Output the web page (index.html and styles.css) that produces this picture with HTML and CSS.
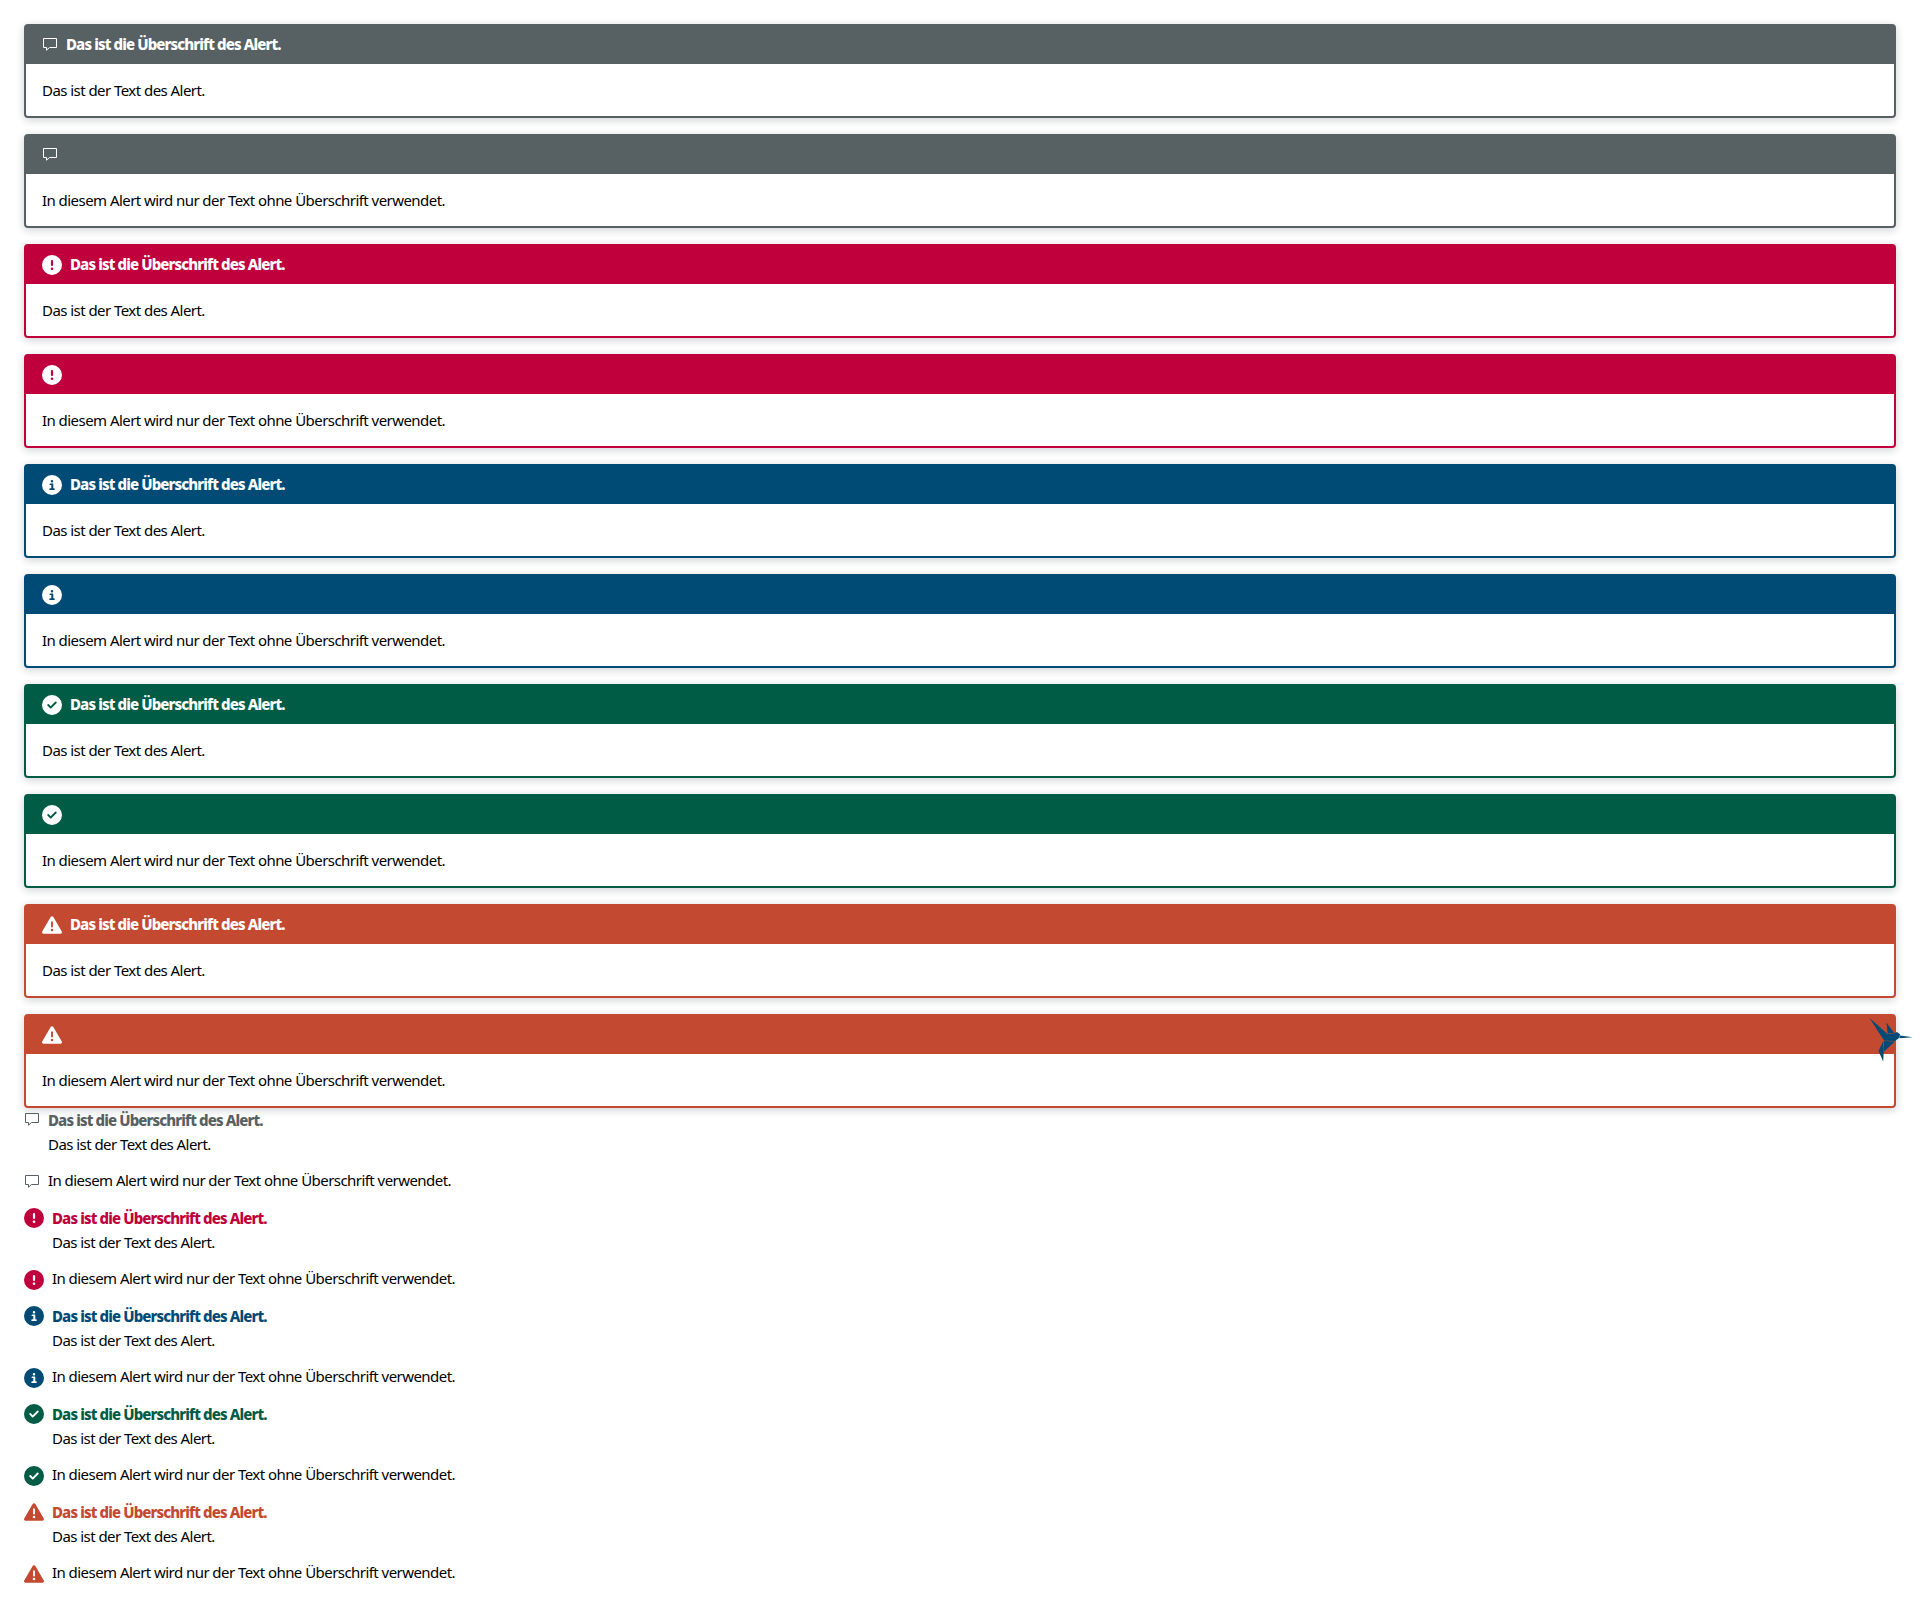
FILE: index.html
```html
<!DOCTYPE html>
<html lang="de">
<head>
<meta charset="utf-8">
<title>Alerts</title>
<link rel="stylesheet" href="styles.css">
</head>
<body>
<svg class="sprite" aria-hidden="true">
  <symbol id="message" viewBox="0 0 16 20"><path d="M1.5 3.5h13v9H7.500l-3 2.700v-2.700h-3z" fill="none" stroke="currentColor"/></symbol>
  <symbol id="error" viewBox="0 0 20 20"><path fill-rule="evenodd" fill="currentColor" d="M10 0a10 10 0 1 0 0 20a10 10 0 1 0 0-20zM10 5q1.1 0 1.1 1.1v4q0 1-1.1 1t-1.1-1v-4Q8.900 5 10 5zM10 12.500a1.300 1.300 0 1 1 0 2.600a1.300 1.300 0 1 1 0-2.600z"/></symbol>
  <symbol id="info" viewBox="0 0 20 20"><path fill-rule="evenodd" fill="currentColor" d="M10 0a10 10 0 1 0 0 20a10 10 0 1 0 0-20zM10 5a1.250 1.250 0 1 1 0 2.500a1.250 1.250 0 1 1 0-2.500zM8.400 8.400h2.400q.5 0 .5.5v4.400h.6q.9 0 .9.850t-.9.850H8.200q-.9 0-.9-.850t.9-.850h1.100v-3.200h-.9q-.9 0-.9-.850t.9-.850z"/></symbol>
  <symbol id="success" viewBox="0 0 20 20"><path fill-rule="evenodd" fill="currentColor" d="M10 0a10 10 0 1 0 0 20a10 10 0 1 0 0-20zM14.400 8.200l-5 5a.94.94 0 0 1-1.330 0l-2.500-2.500a.94.94 0 0 1 1.330-1.330l1.840 1.840 4.340-4.340a.94.94 0 0 1 1.330 1.330z"/></symbol>
  <symbol id="warning" viewBox="0 0 20 20"><path fill-rule="evenodd" fill="currentColor" d="M10 1.250c.55 0 1.070.3 1.350.78l8.430 14.370a1.570 1.570 0 0 1-1.370 2.350H1.570A1.570 1.570 0 0 1 .22 16.400L8.650 2.030C8.930 1.550 9.450 1.250 10 1.250zM10 6.250a.94.94 0 0 0-.94.94v4.370a.94.94 0 0 0 1.880 0V7.190A.94.94 0 0 0 10 6.250zM10 13.750a1.250 1.250 0 1 0 0 2.500a1.250 1.250 0 1 0 0-2.500z"/></symbol>
</svg>
<main>
  <div class="cards">
    <section class="card default"><h2><svg class="icon slim"><use href="#message"/></svg><span>Das ist die Überschrift des Alert.</span></h2><p>Das ist der Text des Alert.</p></section>
    <section class="card default"><h2><svg class="icon slim"><use href="#message"/></svg></h2><p>In diesem Alert wird nur der Text ohne Überschrift verwendet.</p></section>
    <section class="card error"><h2><svg class="icon"><use href="#error"/></svg><span>Das ist die Überschrift des Alert.</span></h2><p>Das ist der Text des Alert.</p></section>
    <section class="card error"><h2><svg class="icon"><use href="#error"/></svg></h2><p>In diesem Alert wird nur der Text ohne Überschrift verwendet.</p></section>
    <section class="card info"><h2><svg class="icon"><use href="#info"/></svg><span>Das ist die Überschrift des Alert.</span></h2><p>Das ist der Text des Alert.</p></section>
    <section class="card info"><h2><svg class="icon"><use href="#info"/></svg></h2><p>In diesem Alert wird nur der Text ohne Überschrift verwendet.</p></section>
    <section class="card success"><h2><svg class="icon"><use href="#success"/></svg><span>Das ist die Überschrift des Alert.</span></h2><p>Das ist der Text des Alert.</p></section>
    <section class="card success"><h2><svg class="icon"><use href="#success"/></svg></h2><p>In diesem Alert wird nur der Text ohne Überschrift verwendet.</p></section>
    <section class="card warning"><h2><svg class="icon"><use href="#warning"/></svg><span>Das ist die Überschrift des Alert.</span></h2><p>Das ist der Text des Alert.</p></section>
    <section class="card warning"><h2><svg class="icon"><use href="#warning"/></svg></h2><p>In diesem Alert wird nur der Text ohne Überschrift verwendet.</p></section>
  </div>
  <div class="messages">
    <section class="msg default"><svg class="icon slim"><use href="#message"/></svg><div><h2><span>Das ist die Überschrift des Alert.</span></h2><p>Das ist der Text des Alert.</p></div></section>
    <section class="msg single default"><svg class="icon slim"><use href="#message"/></svg><p>In diesem Alert wird nur der Text ohne Überschrift verwendet.</p></section>
    <section class="msg error"><svg class="icon"><use href="#error"/></svg><div><h2><span>Das ist die Überschrift des Alert.</span></h2><p>Das ist der Text des Alert.</p></div></section>
    <section class="msg single error"><svg class="icon"><use href="#error"/></svg><p>In diesem Alert wird nur der Text ohne Überschrift verwendet.</p></section>
    <section class="msg info"><svg class="icon"><use href="#info"/></svg><div><h2><span>Das ist die Überschrift des Alert.</span></h2><p>Das ist der Text des Alert.</p></div></section>
    <section class="msg single info"><svg class="icon"><use href="#info"/></svg><p>In diesem Alert wird nur der Text ohne Überschrift verwendet.</p></section>
    <section class="msg success"><svg class="icon"><use href="#success"/></svg><div><h2><span>Das ist die Überschrift des Alert.</span></h2><p>Das ist der Text des Alert.</p></div></section>
    <section class="msg single success"><svg class="icon"><use href="#success"/></svg><p>In diesem Alert wird nur der Text ohne Überschrift verwendet.</p></section>
    <section class="msg warning"><svg class="icon"><use href="#warning"/></svg><div><h2><span>Das ist die Überschrift des Alert.</span></h2><p>Das ist der Text des Alert.</p></div></section>
    <section class="msg single warning"><svg class="icon"><use href="#warning"/></svg><p>In diesem Alert wird nur der Text ohne Überschrift verwendet.</p></section>
  </div>
</main>
<svg class="bird" viewBox="0 0 44 44" fill="#004b76">
  <path d="M.5 0L18 15.500 24.500 21 14.500 21.800z"/><path d="M17.300 4.500L25 14.800 18.700 15.700z"/><path d="M19 16.200L25.300 15.300 28 14 31 16.300 30.500 19.500 26 23 14.500 22.500z"/><path d="M31 17.500L43.800 19.300 30.500 20.300z"/><path d="M15 23L26 23.400 15 33.500z"/><path d="M14.200 23L14.700 33.500 14.200 43.500 9.500 33z"/>
</svg>
</body>
</html>
```
FILE: styles.css
```css
body {
  margin: 0;
  background: #fff;
  color: #000;
  font: 15px/24px "Noto Sans", sans-serif;
}
h2, p { margin: 0; font-size: 15px; line-height: 24px; }
p { letter-spacing: -0.55px; }
h2 { font-weight: 800; letter-spacing: -0.88px; }
.sprite { display: none; }
main { padding: 24px; }
.default { --tone: #576164; }
.error { --tone: #c0003c; }
.info { --tone: #004b76; }
.success { --tone: #005c45; }
.warning { --tone: #c44931; }
.icon { flex: none; width: 20px; height: 20px; }
.icon.slim { width: 16px; }
.cards { display: flex; flex-direction: column; gap: 16px; }
.card {
  box-sizing: border-box;
  height: 94px;
  border: 2px solid var(--tone);
  border-radius: 4px;
  box-shadow: 0 2px 8px rgb(0 20 30 / 20%);
}
.card h2 {
  display: flex;
  align-items: center;
  gap: 8px;
  box-sizing: border-box;
  height: 38px;
  padding: 0 16px 1px;
  background: var(--tone);
  color: #fff;
}
.card h2 span { margin-bottom: 1px; }
.card .icon.slim { margin-top: 1px; }
.card p { padding: 14px 16px; }
.messages { display: flex; flex-direction: column; }
.msg { display: flex; align-items: flex-start; gap: 8px; height: 60px; }
.msg.single { height: 38px; }
.msg .icon, .msg h2 { color: var(--tone); }
.msg .icon { margin-top: 1.500px; }
.msg .icon.slim { margin-top: 2px; }
.msg.single .icon { margin-top: 3.500px; }
.msg.single .icon.slim { margin-top: 4px; }
.bird { position: absolute; left: 1869px; top: 1018px; width: 44px; height: 44px; }
```
